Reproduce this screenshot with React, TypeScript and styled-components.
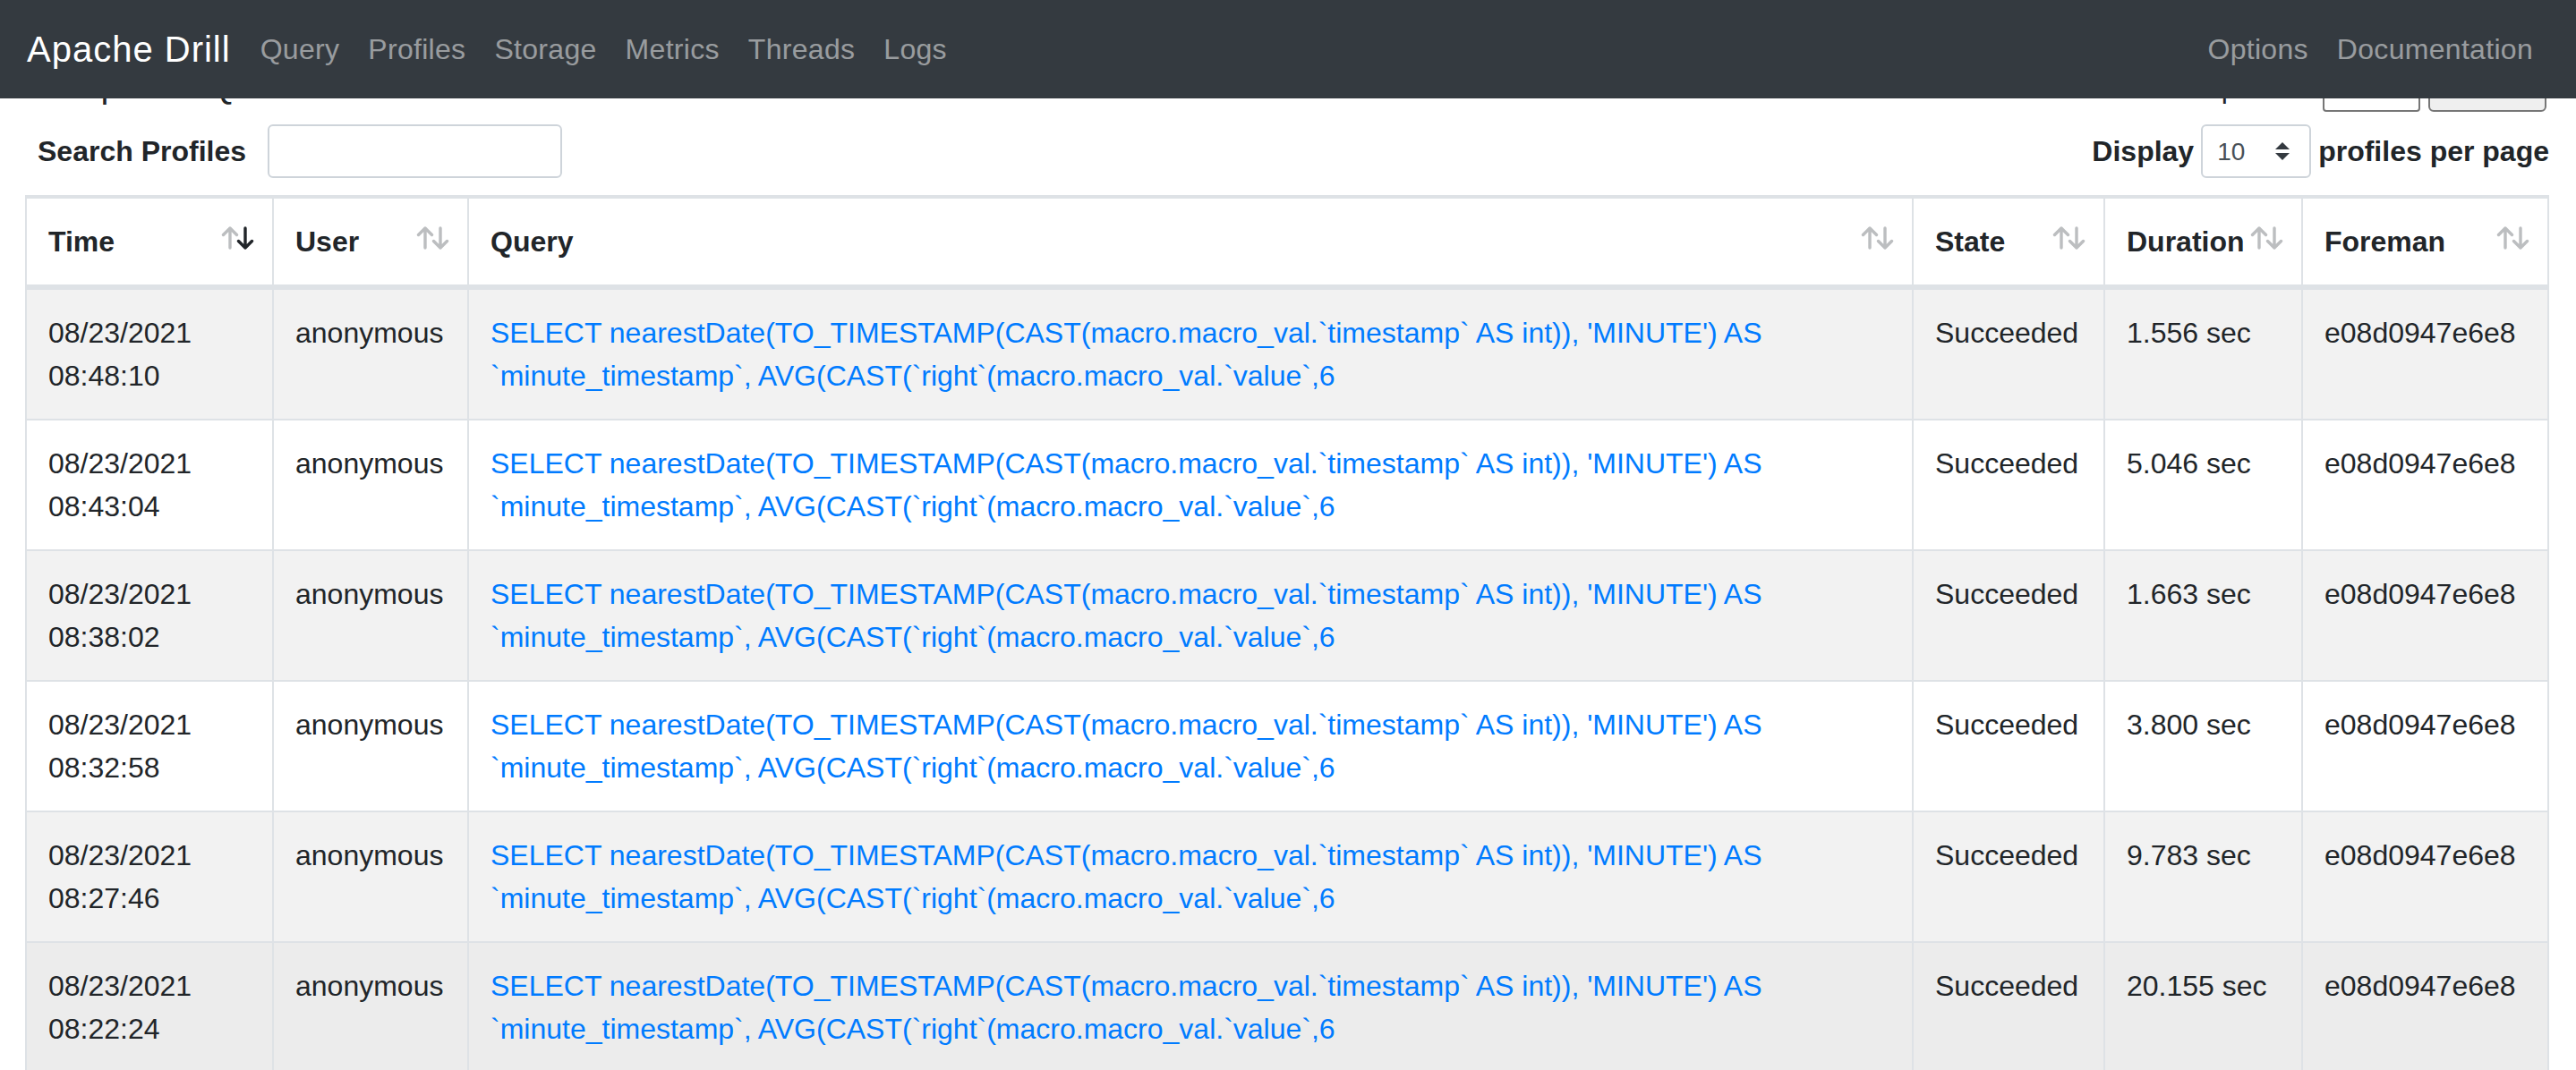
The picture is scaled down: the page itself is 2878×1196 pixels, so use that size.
import React from 'react'
import styled, { createGlobalStyle } from 'styled-components'

const GlobalStyle = createGlobalStyle`
  * { box-sizing: border-box; }
  html, body {
    margin: 0;
    padding: 0;
    background: #fff;
    overflow: hidden;
  }
  body {
    font-family: "Liberation Sans", Arial, Helvetica, sans-serif;
    font-size: 32px;
    line-height: 1.5;
    color: #212529;
  }
`

const QUERY =
  "SELECT nearestDate(TO_TIMESTAMP(CAST(macro.macro_val.`timestamp` AS int)), 'MINUTE') AS `minute_timestamp`, AVG(CAST(`right`(macro.macro_val.`value`,6"

const profiles = [
  { date: '08/23/2021', time: '08:48:10', duration: '1.556 sec' },
  { date: '08/23/2021', time: '08:43:04', duration: '5.046 sec' },
  { date: '08/23/2021', time: '08:38:02', duration: '1.663 sec' },
  { date: '08/23/2021', time: '08:32:58', duration: '3.800 sec' },
  { date: '08/23/2021', time: '08:27:46', duration: '9.783 sec' },
  { date: '08/23/2021', time: '08:22:24', duration: '20.155 sec' },
]

const columns: { title: string; width: number; sort?: 'up' | 'down' }[] = [
  { title: 'Time', width: 276, sort: 'down' },
  { title: 'User', width: 218 },
  { title: 'Query', width: 1614 },
  { title: 'State', width: 214 },
  { title: 'Duration', width: 221 },
  { title: 'Foreman', width: 273 },
]

function SortIcon({ active }: { active?: 'up' | 'down' }) {
  const on = '#212529'
  const off = '#bcbec0'
  return (
    <SortGlyph width="40" height="30" viewBox="0 0 40 30">
      <g fill="none" strokeWidth="3.4" strokeLinecap="round" strokeLinejoin="round">
        <path d="M11 26V4M3.5 11.5L11 4l7.5 7.5" stroke={active === 'up' ? on : off} />
        <path d="M28 4v22M20.5 18.5L28 26l7.5-7.5" stroke={active === 'down' ? on : off} />
      </g>
    </SortGlyph>
  )
}

function App() {
  return (
    <>
      <GlobalStyle />
      <Navbar>
        <Brand href="#">Apache Drill</Brand>
        <NavList>
          <NavLink href="#">Query</NavLink>
          <NavLink href="#">Profiles</NavLink>
          <NavLink href="#">Storage</NavLink>
          <NavLink href="#">Metrics</NavLink>
          <NavLink href="#">Threads</NavLink>
          <NavLink href="#">Logs</NavLink>
        </NavList>
        <NavRight>
          <NavLink href="#">Options</NavLink>
          <NavLink href="#">Documentation</NavLink>
        </NavRight>
      </Navbar>

      <Page>
        <TitleBar>
          <Title>Completed Queries</Title>
          <FetchForm onSubmit={e => e.preventDefault()}>
            <FetchLabel>Fetch up to</FetchLabel>
            <FetchInput type="text" aria-label="max" />
            <FetchButton type="submit" aria-label="fetch" />
          </FetchForm>
        </TitleBar>

        <FilterRow>
          <FilterLabel>
            Search Profiles
            <SearchInput type="search" />
          </FilterLabel>
          <LengthLabel>
            Display
            <SelectBox>
              <LengthSelect defaultValue="10">
                <option value="10">10</option>
                <option value="25">25</option>
                <option value="50">50</option>
                <option value="100">100</option>
              </LengthSelect>
              <SelectArrow width="16" height="20" viewBox="0 0 4 5">
                <path d="M2 0L0 2h4zm0 5L0 3h4z" fill="#343a40" />
              </SelectArrow>
            </SelectBox>
            profiles per page
          </LengthLabel>
        </FilterRow>

        <Table>
          <thead>
            <tr>
              {columns.map(c => (
                <HeadCell key={c.title} $w={c.width}>
                  {c.title}
                  <SortIcon active={c.sort} />
                </HeadCell>
              ))}
            </tr>
          </thead>
          <tbody>
            {profiles.map((p, i) => (
              <Row key={p.time} $striped={i % 2 === 0} $hover={i === 5}>
                <Cell>
                  {p.date} {p.time}
                </Cell>
                <Cell>anonymous</Cell>
                <Cell>
                  <QueryLink href="#">{QUERY}</QueryLink>
                </Cell>
                <Cell>Succeeded</Cell>
                <Cell>{p.duration}</Cell>
                <Cell>e08d0947e6e8</Cell>
              </Row>
            ))}
          </tbody>
        </Table>
      </Page>
    </>
  )
}

export default App

const Navbar = styled.nav`
  position: fixed;
  top: 0;
  left: 0;
  right: 0;
  z-index: 10;
  height: 110px;
  display: flex;
  align-items: center;
  padding: 0 32px 0 30px;
  background: #343a40;
`

const Brand = styled.a`
  margin-right: 17px;
  font-size: 40px;
  line-height: 60px;
  letter-spacing: 1px;
  color: #fff;
  text-decoration: none;
`

const NavList = styled.div`
  display: flex;
  align-items: center;
`

const NavRight = styled(NavList)`
  margin-left: auto;
`

const NavLink = styled.a`
  padding: 0 16px;
  font-size: 32px;
  line-height: 48px;
  letter-spacing: 0.3px;
  color: rgba(255, 255, 255, 0.5);
  text-decoration: none;
`

const Page = styled.main`
  padding: 70px 30px 0 28px;
`

const TitleBar = styled.div`
  display: flex;
  justify-content: space-between;
  align-items: flex-end;
  height: 56px;
`

const Title = styled.h5`
  margin: 0 0 7px;
  font-size: 40px;
  font-weight: 500;
  line-height: 48px;
`

const FetchForm = styled.form`
  display: flex;
  align-items: flex-end;
  gap: 9px;
  margin: 0 3px 1px 0;
`

const FetchLabel = styled.span`
  margin: 0 51px 3px 0;
  line-height: 48px;
`

const FetchInput = styled.input`
  width: 109px;
  height: 44px;
  border: 2px solid #767676;
  border-radius: 4px;
  background: #fff;
`

const FetchButton = styled.button`
  width: 132px;
  height: 44px;
  border: 2px solid #767676;
  border-radius: 6px;
  background: #efefef;
`

const FilterRow = styled.div`
  display: flex;
  justify-content: space-between;
  align-items: center;
  height: 60px;
  margin-top: 13px;
  padding-left: 14px;
`

const FilterLabel = styled.label`
  display: flex;
  align-items: center;
  gap: 24px;
  font-weight: 700;
`

const SearchInput = styled.input`
  width: 329px;
  height: 60px;
  padding: 0 16px;
  border: 2px solid #ced4da;
  border-radius: 6px;
  font: inherit;
  font-size: 28px;
  outline: none;
`

const LengthLabel = styled.label`
  display: flex;
  align-items: center;
  gap: 8px;
  font-weight: 700;
`

const SelectBox = styled.span`
  position: relative;
  display: inline-flex;
`

const LengthSelect = styled.select`
  width: 123px;
  height: 60px;
  padding: 0 40px 0 16px;
  border: 2px solid #ced4da;
  border-radius: 6px;
  background: #fff;
  font-family: inherit;
  font-size: 28px;
  font-weight: 400;
  color: #495057;
  appearance: none;
  outline: none;
`

const SelectArrow = styled.svg`
  position: absolute;
  right: 24px;
  top: 20px;
  pointer-events: none;
`

const Table = styled.table`
  width: 100%;
  margin-top: 19px;
  table-layout: fixed;
  border-collapse: separate;
  border-spacing: 0;
  border: 2px solid #dee2e6;
`

const HeadCell = styled.th<{ $w: number }>`
  position: relative;
  width: ${p => p.$w}px;
  padding: 24px 30px 24px 24px;
  border-top: 2px solid #dee2e6;
  border-right: 2px solid #dee2e6;
  border-bottom: 4px solid #dee2e6;
  text-align: left;
  font-weight: 700;
  line-height: 48px;
  vertical-align: bottom;
  white-space: nowrap;

  &:last-child {
    border-right: 0;
  }
`

const SortGlyph = styled.svg`
  position: absolute;
  right: 18px;
  bottom: 37px;
`

const Row = styled.tr<{ $striped: boolean; $hover: boolean }>`
  background: ${p => (p.$hover ? '#ececec' : p.$striped ? '#f2f2f2' : '#fff')};
`

const Cell = styled.td`
  padding: 24px;
  border-top: 2px solid #dee2e6;
  border-right: 2px solid #dee2e6;
  line-height: 48px;
  vertical-align: top;

  &:last-child {
    border-right: 0;
  }
`

const QueryLink = styled.a`
  color: #007bff;
  text-decoration: none;
`
